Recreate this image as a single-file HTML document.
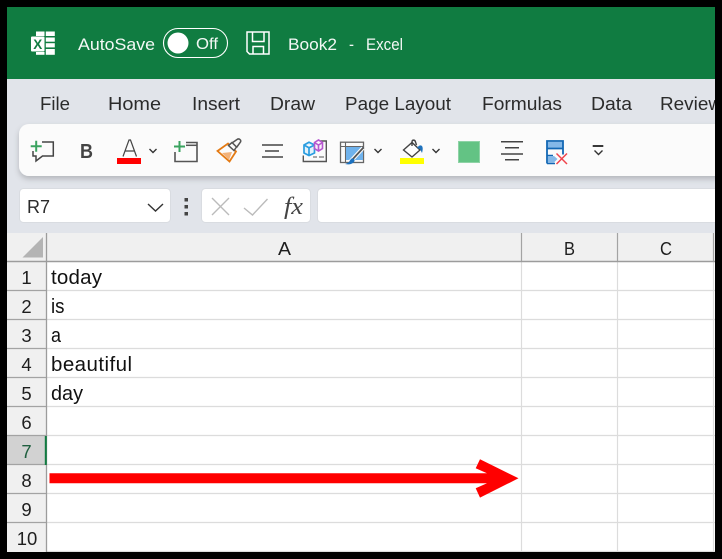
<!DOCTYPE html>
<html><head><meta charset="utf-8"><style>
html,body{margin:0;padding:0;background:#000;width:722px;height:559px;overflow:hidden}
svg{display:block}
text{font-family:"Liberation Sans",sans-serif}
</style></head><body>
<svg xmlns="http://www.w3.org/2000/svg" width="722" height="559" viewBox="0 0 722 559">
<defs>
<filter id="sh" x="-5%" y="-20%" width="110%" height="150%"><feDropShadow dx="0" dy="3" stdDeviation="3" flood-color="#000" flood-opacity=".2"/></filter>
<clipPath id="c"><rect x="7" y="7" width="708" height="545"/></clipPath>
</defs>
<rect width="722" height="559" fill="#000"/>
<g clip-path="url(#c)">
<rect x="7" y="79" width="708" height="154" fill="#e1e4ea"/>
<rect x="7" y="7" width="708" height="72" fill="#107c41"/>
<!-- excel icon -->
<g fill="#fff">
<rect x="36" y="31.500" width="8.500" height="4.500"/>
<rect x="36" y="52" width="8.500" height="2.800"/>
<rect x="45.800" y="31.500" width="9" height="4.500"/>
<rect x="45.800" y="37.500" width="9" height="4.200"/>
<rect x="45.800" y="43.200" width="9" height="4.200"/>
<rect x="45.800" y="49" width="9" height="5.800"/>
<rect x="31" y="36.500" width="13.500" height="15" rx="1"/>
</g>
<text x="33.300" y="49" font-size="13.500" font-weight="700" fill="#107c41">X</text>
<text x="78" y="50" font-size="17" fill="#f3f8f5" textLength="77" lengthAdjust="spacingAndGlyphs">AutoSave</text>
<rect x="163.500" y="28.500" width="64" height="29" rx="14.500" fill="none" stroke="#fff" stroke-width="1.100"/>
<circle cx="178" cy="43" r="10.500" fill="#fff"/>
<text x="196" y="49" font-size="15.500" fill="#f3f8f5" textLength="22" lengthAdjust="spacingAndGlyphs">Off</text>
<path d="M247 32h22v22h-19.500l-2.500-2.500zM252.500 32v9.500h11.500V32M253 54v-7.500h10.500V54" fill="none" stroke="#fff" stroke-width="1.500"/>
<text x="288" y="50" font-size="17" fill="#f3f8f5" textLength="49" lengthAdjust="spacingAndGlyphs">Book2</text>
<text x="349" y="50" font-size="17" fill="#f3f8f5" textLength="5" lengthAdjust="spacingAndGlyphs">-</text>
<text x="366" y="50" font-size="16.500" fill="#f3f8f5" textLength="37" lengthAdjust="spacingAndGlyphs">Excel</text>
<!-- tabs -->
<g font-size="18" fill="#2b2b2b">
<text x="40" y="110" textLength="30" lengthAdjust="spacingAndGlyphs">File</text>
<text x="108" y="110" textLength="53" lengthAdjust="spacingAndGlyphs">Home</text>
<text x="192" y="110" textLength="48" lengthAdjust="spacingAndGlyphs">Insert</text>
<text x="270" y="110" textLength="45" lengthAdjust="spacingAndGlyphs">Draw</text>
<text x="345" y="110" textLength="106" lengthAdjust="spacingAndGlyphs">Page Layout</text>
<text x="482" y="110" textLength="80" lengthAdjust="spacingAndGlyphs">Formulas</text>
<text x="591" y="110" textLength="41" lengthAdjust="spacingAndGlyphs">Data</text>
<text x="660" y="110" textLength="62" lengthAdjust="spacingAndGlyphs">Review</text>
</g>
<!-- toolbar -->
<rect x="19" y="124" width="720" height="52" rx="10" fill="#fbfbfb" filter="url(#sh)"/>
<!-- comment icon -->
<path d="M42 142H53.300V156H42.500L36 161V156H33V151" fill="none" stroke="#444" stroke-width="1.500"/>
<path d="M36.200 140.700v11M30.700 146.200h11" stroke="#3aa35f" stroke-width="2"/>
<text x="80" y="158" font-size="20" font-weight="700" fill="#444" textLength="13" lengthAdjust="spacingAndGlyphs">B</text>
<path d="M123 156.500l6-16.500h1.500l6 16.500M125 151h9.500" fill="none" stroke="#444" stroke-width="1.200"/>
<rect x="117" y="158" width="24" height="6" fill="#f00"/>
<path d="M149.500 149l3.500 3.500 3.500-3.500" fill="none" stroke="#333" stroke-width="1.400"/>
<!-- new sheet icon -->
<path d="M186 142.500h11v19H175V152" fill="none" stroke="#555" stroke-width="1.600"/>
<path d="M186 145.300h11" stroke="#555" stroke-width="1.500"/>
<path d="M179.500 141v11M174 146.500h11" stroke="#3aa35f" stroke-width="2"/>
<!-- format painter -->
<path d="M217.500 151L228 143.500l8 8L229.500 161.500z" fill="none" stroke="#e47a13" stroke-width="1.800"/>
<path d="M222 153l10-1-3 8z" fill="#f2b27a"/>
<path d="M228.500 145.500l3.500-3 4.500 4.500-2.500 3.500zM232 143l5-3.500c2-1.500 4.500 .5 3.500 2.500l-4 5.500" fill="#fbfbfb" stroke="#555" stroke-width="1.500"/>
<!-- lines -->
<path d="M262 145h21M265 151h14M262 157h21" stroke="#444" stroke-width="1.500"/>
<!-- 3d icon -->
<path d="M320 141h6.300v20.500h-23v-6" fill="none" stroke="#555" stroke-width="1.400"/>
<path d="M313 157h4M319 157h5" stroke="#777" stroke-width="1.200"/>
<path d="M304 145l5-2.800 5.500 2.800v8l-5.500 2.500-5-2.500zM304 145l5 2.800 5.500-2.800M309 147.800v7.700" fill="#e4f2fb" stroke="#2a9de0" stroke-width="1.700"/>
<path d="M314.500 142.500l4-2.500 4 2.500v6l-4 2.500-4-2.500zM314.500 142.500l4 2.500 4-2.500M318.500 145v6" fill="#f8eefa" stroke="#b657cf" stroke-width="1.600"/>
<!-- table brush -->
<rect x="340.500" y="142.200" width="23" height="20.300" fill="none" stroke="#666" stroke-width="1.300"/>
<path d="M340 146.500h24M345.500 142v21" stroke="#666" stroke-width="1.100"/>
<rect x="346" y="147" width="17" height="13" fill="#6fb2ec"/>
<path d="M350 162l13-14" stroke="#fbfbfb" stroke-width="4"/>
<path d="M351.500 160.500l12-13" stroke="#555" stroke-width="1.800"/>
<path d="M345 164c3 .8 8 .5 9.500-3 .5-2-2-3.500-3.500-2-1.500 1.500-1.500 4-6 5z" fill="#1d72c0"/>
<path d="M374.500 149l3.500 3.500 3.500-3.500" fill="none" stroke="#333" stroke-width="1.400"/>
<!-- bucket -->
<path d="M403.500 150l8.500-7.500 8 7.500-8 7z" fill="#fff" stroke="#444" stroke-width="1.400"/>
<path d="M412 146v-4c0-2.500 3-2.500 3.500 0l1 3" fill="none" stroke="#444" stroke-width="1.400"/>
<path d="M417 148c2-3 4.500-3.500 5.500-1 .5 2 0 4-.5 6l-2-4z" fill="#1e72bd"/>
<rect x="400" y="158" width="24" height="6" fill="#ff0"/>
<path d="M432.500 149l3.500 3.500 3.500-3.500" fill="none" stroke="#333" stroke-width="1.400"/>
<!-- green square -->
<rect x="458.500" y="141.500" width="21" height="21" fill="#63c384" stroke="#8ed3a6"/>
<!-- align -->
<path d="M501 141.800h22M505 147.800h14M501 154h22M505 159.800h14" stroke="#444" stroke-width="1.500"/>
<!-- delete icon -->
<rect x="547" y="142" width="16" height="6" fill="#84b8e8"/>
<path d="M547 163.500V141h16v7.500H547M563 148.500v6" fill="none" stroke="#1267b4" stroke-width="1.800"/>
<path d="M547 155.500h6M547 163.500h8" stroke="#1267b4" stroke-width="1.500" fill="none"/>
<path d="M548 156h6l3.500 3-3.500 3.500h-6z" fill="#84b8e8"/>
<path d="M556.500 153.500l10.500 10.500M567 153.500l-10.500 10.500" stroke="#f0444c" stroke-width="1.500"/>
<!-- overflow -->
<path d="M592.700 146h10.600" stroke="#222" stroke-width="1.800"/>
<path d="M594.500 150.500l4 4 4-4" fill="none" stroke="#333" stroke-width="1.400"/>
<!-- formula bar -->
<rect x="19.500" y="188.500" width="151" height="34" rx="4" fill="#fff" stroke="#d9dce1"/>
<text x="27" y="213" font-size="18" fill="#2b2b2b">R7</text>
<path d="M148 204l7.500 7 7.500-7" fill="none" stroke="#333" stroke-width="1.400"/>
<g fill="#444"><rect x="184.500" y="198" width="3.500" height="3.500"/><rect x="184.500" y="205" width="3.500" height="3.500"/><rect x="184.500" y="212" width="3.500" height="3.500"/></g>
<rect x="201.500" y="188.500" width="109" height="34" rx="4" fill="#fff" stroke="#d9dce1"/>
<path d="M212 198l17 17M229 198l-17 17" stroke="#bbb" stroke-width="1.400"/>
<path d="M244 208l8.500 7 15-16" fill="none" stroke="#bbb" stroke-width="1.400"/>
<text x="284" y="214" font-size="24" font-style="italic" fill="#444" style="font-family:'Liberation Serif',serif" textLength="19" lengthAdjust="spacingAndGlyphs">fx</text>
<rect x="317.500" y="188.500" width="420" height="34" rx="4" fill="#fff" stroke="#d9dce1"/>
<!-- sheet -->
<rect x="7" y="233" width="708" height="319" fill="#fff"/>
<rect x="7" y="233" width="708" height="29" fill="#f0f0f0"/>
<rect x="7" y="262" width="39" height="290" fill="#f0f0f0"/>
<rect x="7" y="436" width="39" height="29" fill="#d2d2d2"/>
<!-- grid -->
<g stroke="#dcdcdc" stroke-width="1.200">
<path d="M47 290.500h668M47 319.500h668M47 348.500h668M47 377.500h668M47 406.500h668M47 435.500h668M47 464.500h668M47 493.500h668M47 522.500h668M47 551.500h668"/>
<path d="M521.500 262v290M617.500 262v290M713.500 262v290"/>
</g>
<g stroke="#a3a3a3" stroke-width="1.200">
<path d="M7 290.500h39M7 319.500h39M7 348.500h39M7 377.500h39M7 406.500h39M7 435.500h39M7 464.500h39M7 493.500h39M7 522.500h39"/>
<path d="M521.500 233v28M617.500 233v28M713.500 233v28"/>
</g>
<path d="M7 261.500h708" stroke="#9c9c9c" stroke-width="1.400"/>
<path d="M46.500 233v319" stroke="#9c9c9c" stroke-width="1.300"/>
<path d="M45.800 436v29" stroke="#107c41" stroke-width="2"/>
<path d="M22.500 257.500L43 237v20.500z" fill="#b4b4b4"/>
<g font-size="18" fill="#1e1e1e">
<text x="278" y="255" textLength="13" lengthAdjust="spacingAndGlyphs">A</text>
<text x="564" y="255" textLength="11" lengthAdjust="spacingAndGlyphs">B</text>
<text x="660" y="255" textLength="12" lengthAdjust="spacingAndGlyphs">C</text>
</g>
<g font-size="18.500" fill="#1e1e1e" text-anchor="middle">
<text x="26.500" y="284">1</text>
<text x="26.500" y="313">2</text>
<text x="26.500" y="342">3</text>
<text x="26.500" y="371">4</text>
<text x="26.500" y="400">5</text>
<text x="26.500" y="429">6</text>
<text x="26.500" y="458" fill="#1f5f3f">7</text>
<text x="26.500" y="487">8</text>
<text x="26.500" y="516">9</text>
<text x="27" y="545">10</text>
</g>
<g font-size="20.500" fill="#111">
<text x="51" y="284" textLength="51" lengthAdjust="spacing">today</text>
<text x="51" y="313" textLength="13.500" lengthAdjust="spacingAndGlyphs">is</text>
<text x="51" y="342" textLength="10" lengthAdjust="spacingAndGlyphs">a</text>
<text x="51" y="371" textLength="81" lengthAdjust="spacing">beautiful</text>
<text x="51" y="400" textLength="32" lengthAdjust="spacingAndGlyphs">day</text>
</g>
<!-- arrow -->
<path d="M49.500 473.300H487L475.700 468.300 480 459.300 518.500 478.300 480 497.600 475.700 488.300 487 483.300H49.500z" fill="#f00"/>
</g>
</svg>
</body></html>
